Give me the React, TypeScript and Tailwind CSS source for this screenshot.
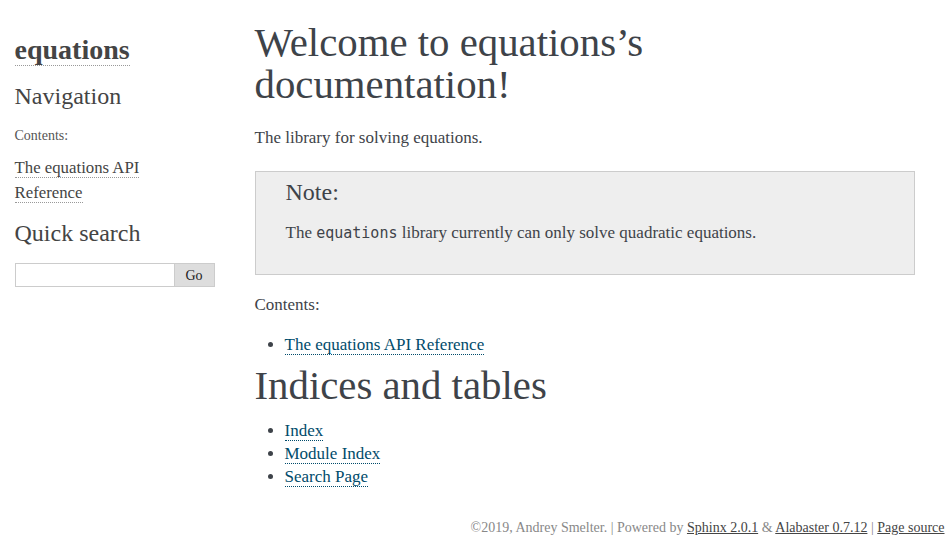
import React from 'react';

const serif = "font-['Liberation_Serif',serif]";

const BodyLink: React.FC<{ children: React.ReactNode }> = ({ children }) => (
  <a href="#" className="text-[#004B6B] no-underline border-b border-dotted border-[#004B6B]">
    {children}
  </a>
);

const SideLink: React.FC<{ children: React.ReactNode }> = ({ children }) => (
  <a href="#" className="text-[#444] no-underline border-b border-dotted border-[#999]">
    {children}
  </a>
);

const Sidebar: React.FC = () => (
  <aside className="w-[220px] shrink-0 px-[10px] text-[14px] text-[#444]">
    <h1 className="mt-[34px] text-[28px] font-bold leading-[32px] text-[#444]">
      <SideLink>equations</SideLink>
    </h1>
    <h3 className="mt-[16px] text-[24px] leading-[28px] text-[#444]">Navigation</h3>
    <p className="mt-[15px] text-[14px] leading-[21px] text-[#555]">Contents:</p>
    <ul className="mt-[9px] max-w-[180px] text-[16.8px] leading-[25px]">
      <li>
        <SideLink>The equations API Reference</SideLink>
      </li>
    </ul>
    <h3 className="mt-[14px] text-[24px] leading-[28px] text-[#444]">Quick search</h3>
    <form className="mt-[16px] flex" onSubmit={(e) => e.preventDefault()}>
      <input
        type="text"
        aria-label="search"
        className="h-[24px] w-[160px] border border-[#CCC] bg-white px-1 text-[14px] outline-none"
      />
      <button
        type="submit"
        className="h-[24px] w-[40px] border border-l-0 border-[#CCC] bg-[#ddd] text-[14px] text-[#222]"
      >
        Go
      </button>
    </form>
  </aside>
);

const Main: React.FC = () => (
  <main className="flex-1 px-[30px] text-[17px] text-[#3E4349]">
    <h1 className="mt-[22px] max-w-[600px] text-[40.8px] leading-[42px] font-normal">
      Welcome to equations’s documentation!
    </h1>
    <p className="mt-[20px] leading-[24px]">The library for solving equations.</p>

    <div className="mt-[21px] border border-[#CCC] bg-[#EEE] px-[30px] pt-[10px] pb-[29px]">
      <p className="text-[24px] leading-[20px]">Note:</p>
      <p className="mt-[19px] leading-[24px]">
        The{' '}
        <code className="font-['DejaVu_Sans_Mono',monospace] text-[15px]">equations</code>{' '}
        library currently can only solve quadratic equations.
      </p>
    </div>

    <p className="mt-[18px] leading-[24px]">Contents:</p>
    <ul className="mt-[16px] list-disc pl-[30px] leading-[24px]">
      <li>
        <BodyLink>The equations API Reference</BodyLink>
      </li>
    </ul>

    <h1 className="mt-[8px] text-[40.8px] leading-[42px] font-normal">Indices and tables</h1>
    <ul className="mt-[12px] list-disc pl-[30px] leading-[23px]">
      <li>
        <BodyLink>Index</BodyLink>
      </li>
      <li>
        <BodyLink>Module Index</BodyLink>
      </li>
      <li>
        <BodyLink>Search Page</BodyLink>
      </li>
    </ul>
  </main>
);

export default function App() {
  return (
    <div className={`${serif} min-h-[547px] bg-white`}>
      <div className="mx-auto flex w-[940px]">
        <Sidebar />
        <Main />
      </div>
      <footer className="mx-auto mt-[30px] w-[940px] text-right text-[14px] leading-[20px] text-[#888]">
        ©2019, Andrey Smelter. | Powered by{' '}
        <a href="#" className="text-[#444] underline">Sphinx 2.0.1</a> &amp;{' '}
        <a href="#" className="text-[#444] underline">Alabaster 0.7.12</a> |{' '}
        <a href="#" className="text-[#444] underline">Page source</a>
      </footer>
    </div>
  );
}
